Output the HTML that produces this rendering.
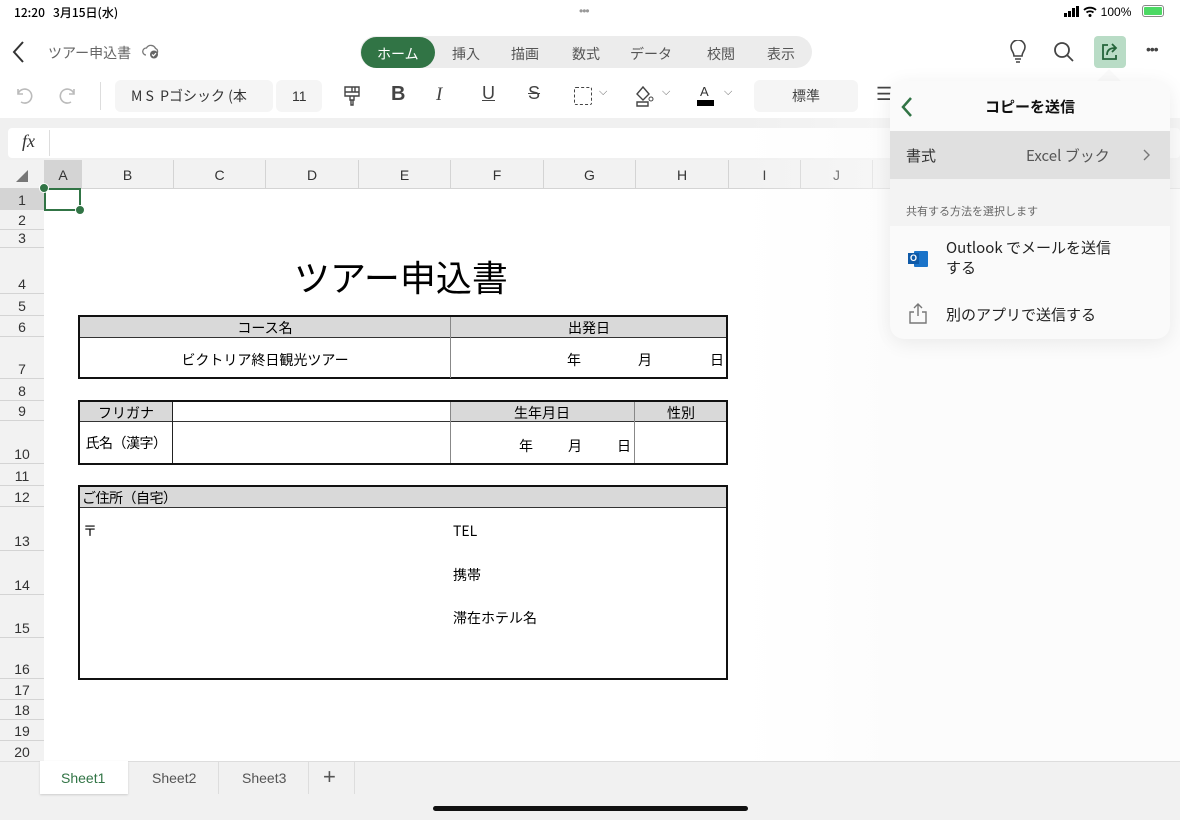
<!DOCTYPE html>
<html><head><meta charset="utf-8">
<style>
*{margin:0;padding:0;box-sizing:border-box}
body{width:1180px;height:820px;overflow:hidden;background:#fff;font-family:"Liberation Sans","Noto Sans CJK JP",sans-serif;position:relative;color:#222}
.a{position:absolute}
.jp{font-family:"Noto Sans CJK JP","Liberation Sans",sans-serif}
.tab{position:absolute;top:44px;font-size:14px;color:#555}
.rh{position:absolute;left:0;width:44px;border-bottom:1px solid #d4d4d4;background:#f2f2f2;font-size:14px;color:#333;text-align:center}
.rh span{position:absolute;bottom:0;left:0;right:0;line-height:18px}
.ch{position:absolute;top:160px;height:29px;border-left:1px solid #d4d4d4;font-size:14px;color:#333;text-align:center;line-height:30px}
.cell{position:absolute;font-size:14px;color:#000;font-family:"Noto Sans CJK JP",sans-serif}
.bx{position:absolute;border:2px solid #111}
.gray{position:absolute;background:#d9d9d9;border-bottom:1px solid #333}
.vl{position:absolute;width:1px;background:#444}
</style></head><body>
<!-- status bar -->
<div class="a jp" style="left:14px;top:4px;font-size:12px;color:#000;font-weight:500">12:20&nbsp;&nbsp;&nbsp;3月15日(水)</div>
<div class="a" style="left:579px;top:4px;font-size:12px;color:#999;letter-spacing:-1px">•••</div>
<div class="a" style="left:1064px;top:5px;font-size:12px;color:#000">
<svg width="16" height="11" style="vertical-align:-1px"><rect x="0" y="7" width="3" height="4" fill="#000"/><rect x="4" y="5" width="3" height="6" fill="#000"/><rect x="8" y="2" width="3" height="9" fill="#000"/><rect x="12" y="0" width="3" height="11" fill="#000"/></svg>
<svg width="14" height="11" style="vertical-align:-1px"><path d="M1 4 A9 9 0 0 1 13 4 M3.5 6.5 A5.5 5.5 0 0 1 10.5 6.5" stroke="#000" stroke-width="1.8" fill="none"/><circle cx="7" cy="9.5" r="1.5"/></svg>
100%</div>
<div class="a" style="left:1142px;top:5px;width:22px;height:12px;border:1px solid #888;border-radius:3px;padding:1px"><div style="background:#4cd964;height:100%;border-radius:1px"></div></div>

<!-- nav row -->
<svg class="a" style="left:12px;top:40px" width="14" height="24"><path d="M11 2 L2 12 L11 22" stroke="#333" stroke-width="2" fill="none"/></svg>
<div class="a jp" style="left:48px;top:43px;font-size:14px;color:#666">ツアー申込書</div>
<svg class="a" style="left:142px;top:42px" width="18" height="18"><path d="M4 13 A3.5 3.5 0 0 1 4.5 6 A5 5 0 0 1 13.5 6.5 A3 3 0 0 1 14 12" stroke="#777" stroke-width="1.3" fill="none"/><circle cx="12" cy="12.5" r="4" fill="#666"/><path d="M10 12.5l1.5 1.4 2.5-2.8" stroke="#fff" stroke-width="1.2" fill="none"/></svg>
<div class="a" style="left:360px;top:36px;width:452px;height:32px;background:#ececec;border-radius:16px"></div>
<div class="a" style="left:361px;top:37px;width:74px;height:31px;background:#317445;border-radius:16px"></div>
<div class="tab jp" style="left:377px;color:#fff">ホーム</div>
<div class="tab jp" style="left:452px">挿入</div>
<div class="tab jp" style="left:511px">描画</div>
<div class="tab jp" style="left:572px">数式</div>
<div class="tab jp" style="left:630px">データ</div>
<div class="tab jp" style="left:707px">校閲</div>
<div class="tab jp" style="left:767px">表示</div>
<svg class="a" style="left:1008px;top:40px" width="20" height="24"><path d="M6 16 C6 12 3 11 3 7 A7 7 0 0 1 17 7 C17 11 14 12 14 16 Z M7 19 H13 M8 22 H12" stroke="#444" stroke-width="1.6" fill="none"/></svg>
<svg class="a" style="left:1053px;top:41px" width="22" height="22"><circle cx="9" cy="9" r="7" stroke="#444" stroke-width="1.8" fill="none"/><path d="M14 14 L20 20" stroke="#444" stroke-width="1.8"/></svg>
<div class="a" style="left:1094px;top:36px;width:32px;height:32px;background:#b9dcc6;border-radius:4px"></div>
<svg class="a" style="left:1099px;top:41px" width="22" height="22"><path d="M9 4 H4 V18 H17 V14" stroke="#24643a" stroke-width="1.8" fill="none"/><path d="M8 14 C8 9 11 7 16 7 M13 3 L17 7 L13 11" stroke="#24643a" stroke-width="1.8" fill="none"/></svg>
<div class="a" style="left:1146px;top:41px;font-size:14px;color:#444;letter-spacing:-1px">•••</div>

<!-- ribbon -->
<svg class="a" style="left:14px;top:86px" width="20" height="20"><path d="M4 3 V8 H9 M4 8 A7 7 0 1 1 7 16" stroke="#bbb" stroke-width="1.6" fill="none"/></svg>
<svg class="a" style="left:58px;top:86px" width="20" height="20"><path d="M16 3 V8 H11 M16 8 A7 7 0 1 0 13 16" stroke="#bbb" stroke-width="1.6" fill="none"/></svg>
<div class="a" style="left:100px;top:82px;width:1px;height:28px;background:#ddd"></div>
<div class="a" style="left:115px;top:80px;width:158px;height:32px;background:#f5f5f5;border-radius:6px"></div>
<div class="a jp" style="left:131px;top:86px;font-size:14px;color:#333">M S&nbsp;&nbsp;Pゴシック (本</div>
<div class="a" style="left:276px;top:80px;width:46px;height:32px;background:#f5f5f5;border-radius:6px"></div>
<div class="a" style="left:292px;top:88px;font-size:14px;color:#333">11</div>
<svg class="a" style="left:343px;top:85px" width="18" height="22"><path d="M2 2 H16 V11 H2 Z M2 7 H16 M9 2 V7 M12 2 V7 M7 11 V15 H11 V11 M8 15 V20 H10 V15" stroke="#444" stroke-width="1.4" fill="none"/></svg>
<div class="a" style="left:391px;top:83px;font-size:20px;font-weight:bold;color:#444">B</div>
<div class="a" style="left:436px;top:84px;font-size:19px;font-style:italic;color:#444;font-family:'Liberation Serif',serif">I</div>
<div class="a" style="left:482px;top:83px;font-size:18px;color:#444;text-decoration:underline">U</div>
<div class="a" style="left:528px;top:83px;font-size:18px;color:#444;text-decoration:line-through">S</div>
<div class="a" style="left:574px;top:87px;width:18px;height:18px;border:1.6px dashed #444;border-radius:2px"></div>
<div class="a" style="left:599px;top:86px;font-size:11px;color:#666">⌵</div>
<svg class="a" style="left:634px;top:84px" width="24" height="24"><path d="M9 3 L3 10 L9 16 L15 10 Z M3 18 H14 V22 H3 Z" stroke="#444" stroke-width="1.4" fill="none"/><circle cx="17" cy="15" r="2" fill="none" stroke="#444"/></svg>
<div class="a" style="left:662px;top:86px;font-size:11px;color:#666">⌵</div>
<div class="a" style="left:700px;top:84px;font-size:13px;color:#333">A</div>
<div class="a" style="left:697px;top:100px;width:17px;height:6px;background:#000"></div>
<div class="a" style="left:724px;top:86px;font-size:11px;color:#666">⌵</div>
<div class="a" style="left:754px;top:80px;width:104px;height:32px;background:#f5f5f5;border-radius:6px"></div>
<div class="a jp" style="left:792px;top:86px;font-size:14px;color:#444">標準</div>
<div class="a" style="left:876px;top:84px;font-size:18px;color:#444">☰</div>

<!-- formula bar -->
<div class="a" style="left:0;top:118px;width:1180px;height:42px;background:#f0f0f0"></div>
<div class="a" style="left:8px;top:128px;width:1172px;height:30px;background:#fff;border-radius:4px"></div>
<div class="a" style="left:22px;top:131px;font-size:18px;font-style:italic;font-family:'Liberation Serif',serif;color:#333">fx</div>
<div class="a" style="left:49px;top:130px;width:1px;height:26px;background:#ddd"></div>

<!-- column headers -->
<div class="a" style="left:0;top:160px;width:1180px;height:29px;background:#f2f2f2;border-bottom:1px solid #d4d4d4"></div>
<svg class="a" style="left:16px;top:170px" width="12" height="12"><path d="M12 0 V12 H0 Z" fill="#777"/></svg>
<div class="ch" style="left:44px;width:37px;background:#d4d4d4">A</div>
<div class="ch" style="left:81px;width:92px">B</div>
<div class="ch" style="left:173px;width:92px">C</div>
<div class="ch" style="left:265px;width:93px">D</div>
<div class="ch" style="left:358px;width:92px">E</div>
<div class="ch" style="left:450px;width:93px">F</div>
<div class="ch" style="left:543px;width:92px">G</div>
<div class="ch" style="left:635px;width:93px">H</div>
<div class="ch" style="left:728px;width:72px">I</div>
<div class="ch" style="left:800px;width:72px">J</div>
<div class="ch" style="left:872px;width:72px"></div>

<!-- row headers -->
<div class="a" style="left:0;top:189px;width:44px;height:572px;background:#f2f2f2;border-right:1px solid #d4d4d4"></div>
<div class="rh" style="top:189px;height:21px;background:#d4d4d4"><span>1</span></div>
<div class="rh" style="top:210px;height:20px"><span>2</span></div>
<div class="rh" style="top:230px;height:18px"><span>3</span></div>
<div class="rh" style="top:248px;height:46px"><span>4</span></div>
<div class="rh" style="top:294px;height:22px"><span>5</span></div>
<div class="rh" style="top:316px;height:21px"><span>6</span></div>
<div class="rh" style="top:337px;height:42px"><span>7</span></div>
<div class="rh" style="top:379px;height:22px"><span>8</span></div>
<div class="rh" style="top:401px;height:20px"><span>9</span></div>
<div class="rh" style="top:421px;height:43px"><span>10</span></div>
<div class="rh" style="top:464px;height:22px"><span>11</span></div>
<div class="rh" style="top:486px;height:21px"><span>12</span></div>
<div class="rh" style="top:507px;height:44px"><span>13</span></div>
<div class="rh" style="top:551px;height:44px"><span>14</span></div>
<div class="rh" style="top:595px;height:43px"><span>15</span></div>
<div class="rh" style="top:638px;height:41px"><span>16</span></div>
<div class="rh" style="top:679px;height:21px"><span>17</span></div>
<div class="rh" style="top:700px;height:20px"><span>18</span></div>
<div class="rh" style="top:720px;height:21px"><span>19</span></div>
<div class="rh" style="top:741px;height:20px;border-bottom:none"><span>20</span></div>

<!-- selection -->
<div class="a" style="left:44px;top:188px;width:37px;height:23px;border:2px solid #317445"></div>
<div class="a" style="left:39px;top:183px;width:10px;height:10px;border-radius:50%;background:#317445;border:1px solid #fff"></div>
<div class="a" style="left:75px;top:205px;width:10px;height:10px;border-radius:50%;background:#317445;border:1px solid #fff"></div>

<!-- title -->
<div class="cell" style="left:294px;top:250px;font-size:36px">ツアー申込書</div>

<!-- table 1 -->
<div class="gray" style="left:80px;top:317px;width:646px;height:21px"></div>
<div class="bx" style="left:78px;top:315px;width:650px;height:64px"></div>
<div class="vl" style="left:450px;top:317px;height:61px;background:#888"></div>
<div class="cell" style="left:80px;width:370px;top:318px;text-align:center">コース名</div>
<div class="cell" style="left:450px;width:278px;top:318px;text-align:center">出発日</div>
<div class="cell" style="left:80px;width:370px;top:350px;text-align:center">ビクトリア終日観光ツアー</div>
<div class="cell" style="left:567px;top:350px">年</div>
<div class="cell" style="left:638px;top:350px">月</div>
<div class="cell" style="left:710px;top:350px">日</div>

<!-- table 2 -->
<div class="gray" style="left:80px;top:402px;width:93px;height:20px"></div>
<div class="gray" style="left:450px;top:402px;width:276px;height:20px"></div>
<div class="a" style="left:173px;top:421px;width:277px;height:1px;background:#333"></div>
<div class="bx" style="left:78px;top:400px;width:650px;height:65px"></div>
<div class="vl" style="left:172px;top:402px;height:61px;background:#222"></div>
<div class="vl" style="left:450px;top:402px;height:61px;background:#888"></div>
<div class="vl" style="left:634px;top:402px;height:61px;background:#888"></div>
<div class="cell" style="left:80px;width:92px;top:403px;text-align:center">フリガナ</div>
<div class="cell" style="left:450px;width:184px;top:403px;text-align:center">生年月日</div>
<div class="cell" style="left:635px;width:92px;top:403px;text-align:center">性別</div>
<div class="cell" style="left:80px;width:92px;top:433px;text-align:center;letter-spacing:-0.5px">氏名（漢字）</div>
<div class="cell" style="left:519px;top:436px">年</div>
<div class="cell" style="left:568px;top:436px">月</div>
<div class="cell" style="left:617px;top:436px">日</div>

<!-- table 3 -->
<div class="gray" style="left:80px;top:487px;width:646px;height:21px"></div>
<div class="bx" style="left:78px;top:485px;width:650px;height:195px"></div>
<div class="cell" style="left:82px;top:488px;letter-spacing:-0.5px">ご住所（自宅）</div>
<div class="cell" style="left:83px;top:521px">〒</div>
<div class="cell" style="left:453px;top:521px">TEL</div>
<div class="cell" style="left:453px;top:565px">携帯</div>
<div class="cell" style="left:453px;top:608px">滞在ホテル名</div>

<!-- fading overlay on right -->
<div class="a" style="left:740px;top:118px;width:440px;height:643px;background:linear-gradient(to right,rgba(255,255,255,0),rgba(250,250,250,0.55) 35%,rgba(250,250,250,0.6))"></div>

<!-- sheet tabs -->
<div class="a" style="left:0;top:761px;width:1180px;height:59px;background:#f1f1f1;border-top:1px solid #ddd"></div>
<div class="a" style="left:40px;top:761px;width:88px;height:33px;background:#fff;box-shadow:0 1px 2px rgba(0,0,0,.15)"></div>
<div class="a" style="left:61px;top:770px;font-size:14px;color:#317445">Sheet1</div>
<div class="a" style="left:152px;top:770px;font-size:14px;color:#555">Sheet2</div>
<div class="a" style="left:218px;top:762px;width:1px;height:32px;background:#ddd"></div>
<div class="a" style="left:242px;top:770px;font-size:14px;color:#555">Sheet3</div>
<div class="a" style="left:308px;top:762px;width:1px;height:32px;background:#ddd"></div>
<div class="a" style="left:323px;top:764px;font-size:22px;color:#555;font-weight:300">+</div>
<div class="a" style="left:354px;top:762px;width:1px;height:32px;background:#ddd"></div>
<div class="a" style="left:433px;top:806px;width:315px;height:5px;border-radius:3px;background:#111"></div>

<!-- popover -->
<div class="a" style="left:1100px;top:73px;width:18px;height:18px;background:#fafafa;transform:rotate(45deg)"></div>
<div class="a" style="left:890px;top:81px;width:280px;height:258px;background:#fafafa;border-radius:14px;overflow:hidden;box-shadow:0 4px 20px rgba(0,0,0,.08)">
 <svg class="a" style="left:10px;top:15px" width="14" height="22"><path d="M11 2 L3 11 L11 20" stroke="#317445" stroke-width="2.5" fill="none"/></svg>
 <div class="a jp" style="left:0;width:280px;top:15px;text-align:center;font-size:15px;font-weight:bold;color:#111">コピーを送信</div>
 <div class="a" style="left:0;top:50px;width:280px;height:48px;background:#e0e0e0"></div>
 <div class="a jp" style="left:16px;top:64px;font-size:15px;color:#333">書式</div>
 <div class="a jp" style="left:136px;top:64px;font-size:15px;color:#555">Excel ブック</div>
 <svg class="a" style="left:253px;top:68px" width="8" height="12"><path d="M1 1 L6 6 L1 11" stroke="#777" stroke-width="1.4" fill="none"/></svg>
 <div class="a" style="left:0;top:98px;width:280px;height:47px;background:#f3f3f3"></div>
 <div class="a jp" style="left:16px;top:122px;font-size:11px;color:#666">共有する方法を選択します</div>
 <div class="a" style="left:18px;top:168px;width:20px;height:20px">
  <div class="a" style="left:6px;top:2px;width:14px;height:16px;background:#1a73c9;border-radius:1px"></div>
  <div class="a" style="left:0;top:4px;width:11px;height:11px;background:#0f5aa8;color:#fff;font-size:9px;font-weight:bold;text-align:center;line-height:11px">O</div>
 </div>
 <div class="a jp" style="left:56px;top:157px;font-size:15px;color:#222;line-height:20px">Outlook でメールを送信<br>する</div>
 <svg class="a" style="left:17px;top:221px" width="22" height="24"><path d="M11 2 V14 M7 6 L11 2 L15 6 M7 10 H3 V21 H19 V10 H15" stroke="#777" stroke-width="1.4" fill="none"/></svg>
 <div class="a jp" style="left:56px;top:223px;font-size:15px;color:#222">別のアプリで送信する</div>
</div>
</body></html>
